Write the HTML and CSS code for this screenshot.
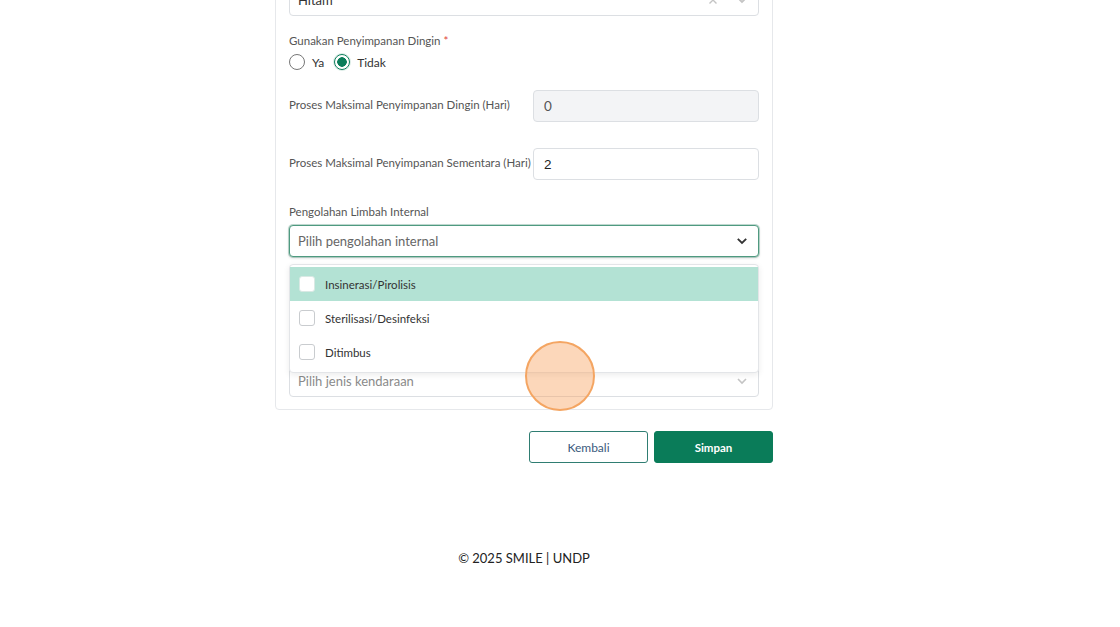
FILE: index.html
```html
<!DOCTYPE html>
<html lang="id">
<head>
<meta charset="utf-8">
<title>Form</title>
<link rel="stylesheet" href="styles.css">
</head>
<body>
<div class="page">
  <div class="column">
    <div class="card">
      <div class="select select-filled">
        <span class="select-value">Hitam</span>
        <span class="select-icons">
          <svg class="ico-x" width="10" height="10" viewBox="0 0 10 10"><path d="M1.5 1.5 L8.5 8.5 M8.5 1.5 L1.5 8.5" stroke="#c4c4c4" stroke-width="1.4" fill="none"/></svg>
          <svg class="ico-chev" width="12" height="8" viewBox="0 0 12 8"><path d="M2 2 L6 6 L10 2" stroke="#c4c4c4" stroke-width="1.8" fill="none"/></svg>
        </span>
      </div>

      <div class="field field-radio">
        <div class="label">Gunakan Penyimpanan Dingin <span class="req">*</span></div>
        <div class="radios">
          <label class="radio"><span class="dot"></span>Ya</label>
          <label class="radio"><span class="dot dot-on"></span>Tidak</label>
        </div>
      </div>

      <div class="row row-first">
        <div class="row-label">Proses Maksimal Penyimpanan Dingin (Hari)</div>
        <div class="input input-disabled">0</div>
      </div>

      <div class="row row-second">
        <div class="row-label">Proses Maksimal Penyimpanan Sementara (Hari)</div>
        <div class="input input-num">2</div>
      </div>

      <div class="field field-proc">
        <div class="label">Pengolahan Limbah Internal</div>
        <div class="select select-focus">
          <span class="placeholder">Pilih pengolahan internal</span>
          <svg width="12" height="8" viewBox="0 0 12 8"><path d="M1.8 1.8 L6 6 L10.2 1.8" stroke="#333" stroke-width="1.8" fill="none"/></svg>
        </div>
        <div class="menu">
          <div class="option option-active"><span class="check"></span>Insinerasi/Pirolisis</div>
          <div class="option"><span class="check"></span>Sterilisasi/Desinfeksi</div>
          <div class="option"><span class="check"></span>Ditimbus</div>
        </div>
      </div>

      <div class="field field-vehicle">
        <div class="select">
          <span class="placeholder placeholder-light">Pilih jenis kendaraan</span>
          <svg width="12" height="8" viewBox="0 0 12 8"><path d="M2 2 L6 6 L10 2" stroke="#c4c4c4" stroke-width="1.6" fill="none"/></svg>
        </div>
      </div>
    </div>

    <div class="actions">
      <button class="btn btn-outline">Kembali</button>
      <button class="btn btn-primary">Simpan</button>
    </div>

    <footer class="footer">© 2025 SMILE | UNDP</footer>
  </div>
  <div class="cursor"></div>
</div>
</body>
</html>
```

FILE: styles.css
```css
* { box-sizing: border-box; }
html, body { margin: 0; padding: 0; background: #fff; }
body {
  font-family: Lato, "Noto Sans", "Liberation Sans", sans-serif;
  color: #333;
  width: 1120px;
  height: 627px;
  overflow: hidden;
}
.page { position: relative; width: 1120px; height: 627px; display: flow-root; }
.column {
  margin-left: 275px;
  width: 498px;
}
.card {
  margin-top: -30px;
  border: 1px solid #e6e8eb;
  border-radius: 4px;
  padding: 13px 13px 12px 13px;
  background: #fff;
}
.select {
  height: 32px;
  border: 1px solid #dcdfe3;
  border-radius: 4px;
  display: flex;
  align-items: center;
  justify-content: space-between;
  padding: 0 10px 0 8px;
  background: #fff;
  font-size: 13px;
}
.select-value { color: #333; }
.select-icons { display: flex; align-items: center; gap: 18px; }
.select-focus {
  border: 1px solid #4f9a80;
  box-shadow: 0 0 0 1px rgba(79,154,128,0.35), 0 1px 3px rgba(0,0,0,0.18);
}
.placeholder { color: #666; }
.placeholder-light { color: #8a8a8a; }
.label { font-size: 11.5px; line-height: 18px; color: #555; }
.req { color: #e0463a; }
.field-radio { margin-top: 16px; }
.radios { display: flex; align-items: center; gap: 10px; margin-top: 4px; height: 16px; }
.radio { display: flex; align-items: center; font-size: 12px; color: #333; gap: 7px; }
.dot {
  width: 16px; height: 16px; border-radius: 50%;
  border: 1px solid #777; background: #fff; display: inline-block;
}
.dot-on {
  border: 1.5px solid #0b7d5a;
  background: radial-gradient(circle, #0b7d5a 0 4.5px, #fff 5px);
  box-shadow: 0 0 0 1px rgba(11,125,90,0.15);
}
.row { display: flex; align-items: flex-start; }
.row-first { margin-top: 20px; }
.row-second { margin-top: 26px; }
.row-label {
  width: 244px;
  font-size: 11.5px;
  line-height: 18px;
  color: #555;
  padding-top: 6px;
  white-space: nowrap;
}
.input {
  flex: 1;
  height: 32px;
  border: 1px solid #dcdfe3;
  border-radius: 4px;
  display: flex;
  align-items: center;
  padding-left: 10px;
  font-size: 13.5px;
  color: #333;
}
.input-disabled { background: #f3f4f6; color: #555; }
.input-num { font-family: "Liberation Sans", Arial, sans-serif; color: #222; }
.field-proc { margin-top: 23px; position: relative; }
.field-proc .label { margin-bottom: 4px; }
.menu {
  position: absolute;
  left: 0; right: 0;
  top: 61px;
  background: #fff;
  border: 1px solid #e3e5e8;
  border-radius: 4px;
  padding: 2px 0 3px;
  box-shadow: 0 2px 6px rgba(0,0,0,0.08);
  z-index: 5;
}
.option {
  height: 34px;
  display: flex;
  align-items: center;
  padding-left: 9px;
  font-size: 11.5px;
  color: #333;
  gap: 10px;
}
.option-active { background: #b3e2d4; }
.check {
  width: 16px; height: 16px;
  border: 1px solid #c9cccf;
  border-radius: 3px;
  background: #fff;
}
.option-active .check { border-color: #d9e9e4; }
.field-vehicle { margin-top: 108px; }
.actions {
  display: flex;
  justify-content: flex-end;
  gap: 6px;
  margin-top: 21px;
}
.btn {
  width: 119px;
  height: 32px;
  border-radius: 3px;
  font-family: Lato, "Noto Sans", sans-serif;
  font-size: 12px;
  cursor: pointer;
}
.btn-outline { background: #fff; border: 1px solid #2f7d72; color: #3b5a7c; }
.btn-primary { background: #0a7c59; border: 1px solid #0a7c59; color: #fff; font-weight: 700; font-size: 11.5px; }
.footer {
  margin-top: 86px;
  text-align: center;
  font-size: 13px;
  line-height: 18px;
  color: #222;
}
.cursor {
  position: absolute;
  left: 525px;
  top: 341px;
  width: 70px;
  height: 70px;
  border-radius: 50%;
  border: 2px solid #f4a562;
  background: rgba(248, 160, 90, 0.42);
  z-index: 10;
}
```
